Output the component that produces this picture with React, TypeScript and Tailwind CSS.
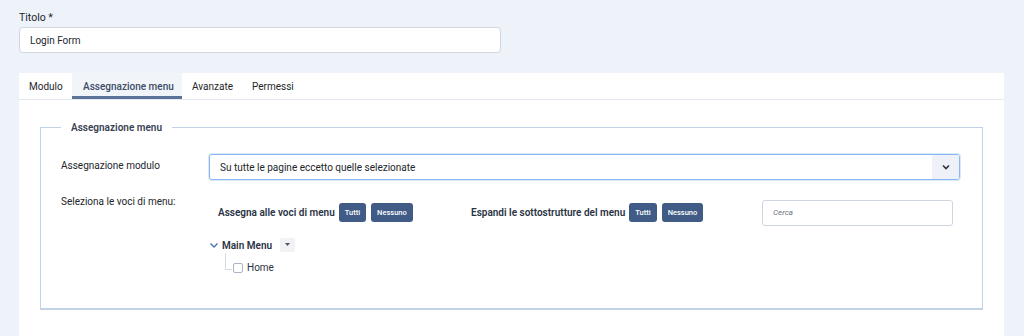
import React from 'react';

const font = { fontFamily: 'Roboto, "Noto Sans", sans-serif' };

const SmallButton: React.FC<{ label: string }> = ({ label }) => (
  <button className="h-[19px] px-[6px] rounded-[3px] bg-[#3f5b86] text-white text-[7.5px] font-medium leading-none">
    {label}
  </button>
);

export default function App() {
  return (
    <div style={font} className="w-[1024px] h-[336px] overflow-hidden bg-[#eef2f9] text-[#22262a] whitespace-nowrap text-[10px]">
      <div className="px-[19px] pt-[11px]">
        <div className="text-[10.5px] leading-[13px]">Titolo *</div>
        <div className="mt-[3px] w-[482px] h-[26px] flex items-center pl-[10px] bg-white border border-[#cfd6e1] rounded-[4px]">
          Login Form
        </div>

        <div className="mt-[20px] w-[985px] h-[300px] bg-white">
          {/* tabs */}
          <div className="flex h-[27px] border-b border-[#e4e9f1]">
            <div className="w-[53px] pl-[10px] flex items-center">Modulo</div>
            <div className="px-[11px] w-[110px] flex items-center bg-[#f1f4f9] border-b-[3px] border-[#5c7399] pt-[3px] font-medium text-[#3b4b68]">
              Assegnazione menu
            </div>
            <div className="w-[60px] pl-[10px] flex items-center">Avanzate</div>
            <div className="pl-[10px] flex items-center">Permessi</div>
          </div>

          <fieldset className="mx-[21px] mt-[20px] h-[190px] border border-[#c3d3e6] border-b-2 pl-[20px] pr-[22px]">
            <legend className="px-[10px] font-semibold text-[#3a4254]">Assegnazione menu</legend>

            <div className="flex mt-[19px]">
              <div className="w-[148px] pt-[4px]">Assegnazione modulo</div>
              <div className="flex-1 h-[26px] flex items-stretch border border-[#8ab7f2] rounded-[3px] shadow-[0_0_0_1px_#dbe8fa] overflow-hidden">
                <div className="flex-1 flex items-center pl-[10px]">
                  Su tutte le pagine eccetto quelle selezionate
                </div>
                <div className="w-[27px] flex items-center justify-center bg-[#eef2f8]">
                  <svg width="10" height="10" viewBox="0 0 10 10" fill="none" stroke="#2d3340" strokeWidth="1.6">
                    <path d="M2 3.5 L5 6.5 L8 3.5" />
                  </svg>
                </div>
              </div>
            </div>

            <div className="flex mt-[14px]">
              <div className="w-[148px]">Seleziona le voci di menu:</div>
              <div className="flex-1 pl-[9px]">
                <div className="flex items-start">
                  <div className="w-[253px] flex items-center gap-[5px] mt-[9px]">
                    <span className="font-semibold text-[#2a3344] mr-[-1px]">Assegna alle voci di menu</span>
                    <SmallButton label="Tutti" />
                    <SmallButton label="Nessuno" />
                  </div>
                  <div className="w-[291px] flex items-center gap-[5px] mt-[9px]">
                    <span className="font-semibold text-[#2a3344] mr-[-1px]">Espandi le sottostrutture del menu</span>
                    <SmallButton label="Tutti" />
                    <SmallButton label="Nessuno" />
                  </div>
                  <div className="mt-[6px] w-[191px] h-[26px] flex items-center pl-[10px] border border-[#cfd6e1] rounded-[3px] text-[8px] italic text-[#6b7280]">
                    Cerca
                  </div>
                </div>

                <div className="mt-[11px] ml-[-9px]">
                  <div className="flex items-center h-[16px]">
                    <svg width="10" height="10" viewBox="0 0 10 10" fill="none" stroke="#4a74b0" strokeWidth="1.4">
                      <path d="M1.5 3.5 L5 7 L8.5 3.5" />
                    </svg>
                    <span className="ml-[3px] font-semibold text-[#2a3344]">Main Menu</span>
                    <span className="ml-[8px] w-[15px] h-[14px] bg-[#f0f2f5] flex items-center justify-center rounded-[2px]">
                      <svg width="5" height="4" viewBox="0 0 5 4">
                        <path d="M0 0 H5 L2.5 3 Z" fill="#555" />
                      </svg>
                    </span>
                  </div>
                  <div className="flex items-end h-[21px] ml-[16px]">
                    <div className="w-[7px] h-[17px] border-l border-b border-[#d5dbe3] mb-[4px]" />
                    <div className="ml-[1px] mb-[1px] w-[10px] h-[10px] border border-[#a9b4c4] rounded-[2px] bg-white" />
                    <span className="ml-[4px] leading-[12px] text-[#2a3344]">Home</span>
                  </div>
                </div>
              </div>
            </div>
          </fieldset>
        </div>
      </div>
    </div>
  );
}
